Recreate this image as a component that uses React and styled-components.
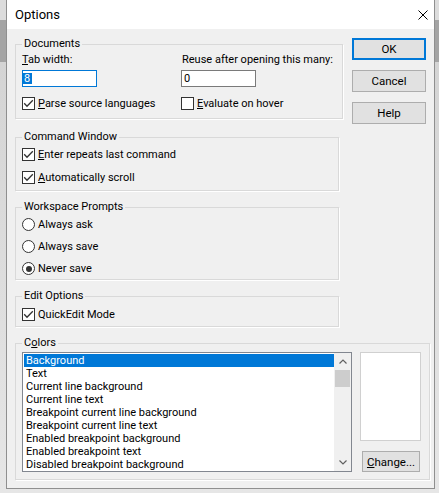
import React from 'react';
import styled, { createGlobalStyle } from 'styled-components';

const GlobalStyle = createGlobalStyle`
  html, body { margin: 0; padding: 0; }
  body {
    width: 439px;
    height: 493px;
    overflow: hidden;
    background: linear-gradient(to bottom, #dcdcdc 0, #dcdcdc 20px, #a4a4a4 20px, #a4a4a4 62px, #d4d4d4 62px, #e6e6e6 100%);
    font-family: Roboto, "Segoe UI", "Liberation Sans", sans-serif;
    font-size: 11px;
    color: #000;
  }
  * { box-sizing: border-box; }
`;

const Window = styled.div`
  margin-left: 6px;
  width: 429px;
  border: 1px solid #8f8f8f;
  border-top: none;
  background: #f0f0f0;
  display: flex;
  flex-direction: column;
`;

const TitleBar = styled.div`
  height: 29px;
  background: #fff;
  display: flex;
  align-items: center;
  justify-content: space-between;
  padding: 0 6px 0 8px;
`;

const Title = styled.span`
  font-size: 13px;
  line-height: 16px;
`;

const CloseIcon = styled.svg`
  display: block;
  width: 10px;
  height: 10px;
`;

const Body = styled.div`
  display: flex;
  flex-direction: column;
  padding: 7px 4px 8px 8px;
`;

const TopRow = styled.div`
  display: flex;
  align-items: flex-start;
`;

const LeftCol = styled.div`
  width: 337px;
  display: flex;
  flex-direction: column;
  align-items: flex-start;
`;

const ButtonCol = styled.div`
  display: flex;
  flex-direction: column;
  gap: 10px;
  padding-top: 2px;
`;

const Button = styled.button`
  width: ${p => p.$w || 74}px;
  height: ${p => p.$h || 22}px;
  margin: 0;
  padding: 0;
  font: inherit;
  font-size: 11.5px;
  color: #000;
  background: #e1e1e1;
  border: 1px solid ${p => (p.$default ? '#0078d7' : '#adadad')};
  box-shadow: ${p => (p.$default ? 'inset 0 0 0 1px #0078d7' : 'none')};
  border-radius: 0;
`;

const Group = styled.fieldset`
  margin: ${p => p.$mt || 0}px 0 0;
  padding: ${p => p.$pt || 0}px ${p => p.$pr || 6}px ${p => p.$pb}px 6px;
  width: ${p => p.$w}px;
  min-width: 0;
  border: 1px solid #d9d9d9;
  box-shadow: 1px 1px 0 #fff;
`;

const Legend = styled.legend`
  padding: 0 2px;
  line-height: 16px;
`;

const DocRow = styled.div`
  display: flex;
`;

const DocCol = styled.div`
  width: ${p => p.$w}px;
  display: flex;
  flex-direction: column;
  align-items: flex-start;
`;

const FieldLabel = styled.div`
  line-height: 15px;
  white-space: nowrap;
  padding-left: ${p => p.$pl || 0}px;
`;

const TextBox = styled.div`
  width: 75px;
  height: 17px;
  margin-top: 3px;
  background: #fff;
  border: 1px solid ${p => (p.$focused ? '#0078d7' : '#7a7a7a')};
  padding: 0 0 0 ${p => (p.$focused ? 0 : 2)}px;
  line-height: 13px;
  display: flex;
  align-items: center;
`;

const Selected = styled.span`
  display: inline-block;
  background: #0078d7;
  color: #fff;
  line-height: 11px;
  padding: 0 2px 0 1px;
`;

const OptionList = styled.div`
  display: flex;
  flex-direction: column;
  gap: ${p => p.$gap || 0}px;
  margin-top: ${p => p.$mt || 0}px;
`;

const CheckRow = styled.label`
  display: flex;
  align-items: center;
  gap: 3px;
  height: 15px;
  line-height: 15px;
  white-space: nowrap;
`;

const Box = styled.span`
  width: 13px;
  height: 13px;
  flex: none;
  background: #fff;
  border: 1px solid #333;
  display: flex;
  align-items: center;
  justify-content: center;
`;

const Radio = styled.span`
  width: 13px;
  height: 13px;
  flex: none;
  border-radius: 50%;
  background: #fff;
  border: 1px solid #333;
  display: flex;
  align-items: center;
  justify-content: center;
  &::after {
    content: '';
    width: 6px;
    height: 6px;
    border-radius: 50%;
    background: ${p => (p.$checked ? '#333' : 'transparent')};
  }
`;

const Key = styled.u`
  text-decoration: underline;
  text-underline-offset: 1px;
`;

const ColorsRow = styled.div`
  display: flex;
  gap: 8px;
  margin-top: 1px;
`;

const ListBox = styled.div`
  width: 330px;
  height: 120px;
  background: #fff;
  border: 1px solid #828790;
  display: flex;
`;

const Items = styled.div`
  flex: 1;
  padding: 1px 0 0 1px;
  overflow: hidden;
`;

const Item = styled.div`
  height: 13px;
  line-height: 13px;
  padding-left: 2px;
  white-space: nowrap;
  background: ${p => (p.$selected ? '#0078d7' : 'transparent')};
  color: ${p => (p.$selected ? '#fff' : '#000')};
`;

const ScrollBar = styled.div`
  width: 17px;
  background: #f0f0f0;
  display: flex;
  flex-direction: column;
  align-items: center;
`;

const ScrollArrow = styled.div`
  width: 17px;
  height: 17px;
  display: flex;
  align-items: center;
  justify-content: center;
`;

const Thumb = styled.div`
  width: 15px;
  height: 17px;
  background: #cdcdcd;
`;

const Track = styled.div`
  flex: 1;
`;

const PreviewCol = styled.div`
  width: 61px;
  display: flex;
  flex-direction: column;
  align-items: flex-start;
  gap: 10px;
`;

const Preview = styled.div`
  width: 61px;
  height: 89px;
  background: #fff;
  border: 1px solid #d0d0d0;
`;

const ChangeButton = styled(Button)`
  margin-left: 2px;
`;

const Check = ({ checked }) => (
  <Box>
    {checked && (
      <svg width="11" height="11" viewBox="0 0 11 11">
        <path d="M1.2 5.3 L4 8.2 L9.8 2.2" fill="none" stroke="#333" strokeWidth="1.3" />
      </svg>
    )}
  </Box>
);

const Chevron = ({ up }) => (
  <svg width="8" height="5" viewBox="0 0 8 5">
    <path d={up ? 'M0.5 4.5 L4 1 L7.5 4.5' : 'M0.5 0.5 L4 4 L7.5 0.5'} fill="none" stroke="#606060" strokeWidth="1.2" />
  </svg>
);

const colorItems = [
  'Background',
  'Text',
  'Current line background',
  'Current line text',
  'Breakpoint current line background',
  'Breakpoint current line text',
  'Enabled breakpoint background',
  'Enabled breakpoint text',
  'Disabled breakpoint background',
];

export default function App() {
  return (
    <>
      <GlobalStyle />
      <Window>
        <TitleBar>
          <Title>Options</Title>
          <CloseIcon viewBox="0 0 10 10">
            <path d="M0.5 0.5 L9.5 9.5 M9.5 0.5 L0.5 9.5" stroke="#000" strokeWidth="1" />
          </CloseIcon>
        </TitleBar>
        <Body>
          <TopRow>
            <LeftCol>
              <Group $w={328} $pb={7}>
                <Legend>Documents</Legend>
                <DocRow>
                  <DocCol $w={159}>
                    <FieldLabel><Key>T</Key>ab width:</FieldLabel>
                    <TextBox $focused><Selected>8</Selected></TextBox>
                    <OptionList $mt={9}>
                      <CheckRow><Check checked /><span><Key>P</Key>arse source languages</span></CheckRow>
                    </OptionList>
                  </DocCol>
                  <DocCol $w={155}>
                    <FieldLabel $pl={1}>Reuse after opening this many:</FieldLabel>
                    <TextBox>0</TextBox>
                    <OptionList $mt={9}>
                      <CheckRow><Check /><span><Key>E</Key>valuate on hover</span></CheckRow>
                    </OptionList>
                  </DocCol>
                </DocRow>
              </Group>

              <Group $w={324} $mt={10} $pt={2} $pb={5}>
                <Legend>Command Window</Legend>
                <OptionList $gap={8}>
                  <CheckRow><Check checked /><span><Key>E</Key>nter repeats last command</span></CheckRow>
                  <CheckRow><Check checked /><span><Key>A</Key>utomatically scroll</span></CheckRow>
                </OptionList>
              </Group>

              <Group $w={324} $mt={8} $pt={2} $pb={3}>
                <Legend>Workspace Prompts</Legend>
                <OptionList $gap={7}>
                  <CheckRow><Radio /><span>Always ask</span></CheckRow>
                  <CheckRow><Radio /><span>Always save</span></CheckRow>
                  <CheckRow><Radio $checked /><span>Never save</span></CheckRow>
                </OptionList>
              </Group>

              <Group $w={324} $mt={8} $pt={3} $pb={4}>
                <Legend>Edit Options</Legend>
                <OptionList>
                  <CheckRow><Check checked /><span>QuickEdit Mode</span></CheckRow>
                </OptionList>
              </Group>
            </LeftCol>

            <ButtonCol>
              <Button $default>OK</Button>
              <Button>Cancel</Button>
              <Button>Help</Button>
            </ButtonCol>
          </TopRow>

          <Group $w={415} $mt={8} $pr={8} $pb={7}>
            <Legend>C<Key>o</Key>lors</Legend>
            <ColorsRow>
              <ListBox>
                <Items>
                  {colorItems.map((t, i) => (
                    <Item key={t} $selected={i === 0}>{t}</Item>
                  ))}
                </Items>
                <ScrollBar>
                  <ScrollArrow><Chevron up /></ScrollArrow>
                  <Thumb />
                  <Track />
                  <ScrollArrow><Chevron /></ScrollArrow>
                </ScrollBar>
              </ListBox>
              <PreviewCol>
                <Preview />
                <ChangeButton $w={58} $h={21}><Key>C</Key>hange...</ChangeButton>
              </PreviewCol>
            </ColorsRow>
          </Group>
        </Body>
      </Window>
    </>
  );
}
